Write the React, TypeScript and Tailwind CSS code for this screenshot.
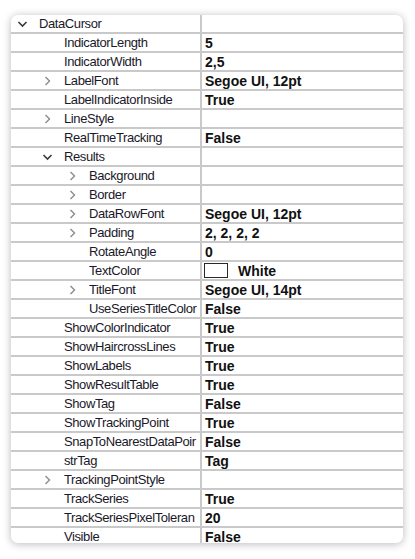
type Row = {
  name: string;
  value?: string;
  level: 0 | 1 | 2;
  toggle?: "open" | "closed";
  color?: boolean;
};

const rows: Row[] = [
  { name: "DataCursor", level: 0, toggle: "open" },
  { name: "IndicatorLength", value: "5", level: 1 },
  { name: "IndicatorWidth", value: "2,5", level: 1 },
  { name: "LabelFont", value: "Segoe UI, 12pt", level: 1, toggle: "closed" },
  { name: "LabelIndicatorInside", value: "True", level: 1 },
  { name: "LineStyle", level: 1, toggle: "closed" },
  { name: "RealTimeTracking", value: "False", level: 1 },
  { name: "Results", level: 1, toggle: "open" },
  { name: "Background", level: 2, toggle: "closed" },
  { name: "Border", level: 2, toggle: "closed" },
  { name: "DataRowFont", value: "Segoe UI, 12pt", level: 2, toggle: "closed" },
  { name: "Padding", value: "2, 2, 2, 2", level: 2, toggle: "closed" },
  { name: "RotateAngle", value: "0", level: 2 },
  { name: "TextColor", value: "White", level: 2, color: true },
  { name: "TitleFont", value: "Segoe UI, 14pt", level: 2, toggle: "closed" },
  { name: "UseSeriesTitleColor", value: "False", level: 2 },
  { name: "ShowColorIndicator", value: "True", level: 1 },
  { name: "ShowHaircrossLines", value: "True", level: 1 },
  { name: "ShowLabels", value: "True", level: 1 },
  { name: "ShowResultTable", value: "True", level: 1 },
  { name: "ShowTag", value: "False", level: 1 },
  { name: "ShowTrackingPoint", value: "True", level: 1 },
  { name: "SnapToNearestDataPoir", value: "False", level: 1 },
  { name: "strTag", value: "Tag", level: 1 },
  { name: "TrackingPointStyle", level: 1, toggle: "closed" },
  { name: "TrackSeries", value: "True", level: 1 },
  { name: "TrackSeriesPixelToleran", value: "20", level: 1 },
  { name: "Visible", value: "False", level: 1 },
];

const indent = ["pl-[6px]", "pl-[31px]", "pl-[56px]"];

function Toggle({ kind }: { kind?: "open" | "closed" }) {
  if (kind === "open")
    return (
      <svg width="11" height="8" viewBox="0 0 11 8" className="shrink-0">
        <polyline points="1.5,2 5.5,6 9.5,2" fill="none" stroke="#3a3a3a" strokeWidth="1.6" />
      </svg>
    );
  if (kind === "closed")
    return (
      <svg width="11" height="10" viewBox="0 0 11 10" className="shrink-0">
        <polyline points="3.5,1 7.5,5 3.5,9" fill="none" stroke="#8c8c8c" strokeWidth="1.4" />
      </svg>
    );
  return <span className="w-[11px] shrink-0" />;
}

export default function App() {
  return (
    <div className="w-[415px] h-[559px] bg-white pl-[11px] pt-[15px]" style={{ fontFamily: '"Liberation Sans", Arial, sans-serif' }}>
      <div className="w-[392px] h-[528px] rounded-[7px] overflow-hidden bg-white shadow-[0_1px_9px_rgba(0,0,0,0.28)]">
        {rows.map((r) => (
          <div key={r.name} className="flex h-[19px] border-b-2 border-[#c9c9c9]">
            <div className={`w-[189px] shrink-0 flex items-center gap-[11px] overflow-hidden whitespace-nowrap ${indent[r.level]}`}>
              <Toggle kind={r.toggle} />
              <span className="text-[13px] tracking-[-0.4px] text-[#1a1829] leading-none">{r.name}</span>
            </div>
            <div className="flex-1 border-l-2 border-[#c9c9c9] flex items-center pl-[3px] overflow-hidden whitespace-nowrap">
              {r.color && <span className="w-[24px] h-[15px] border border-[#2a2a2a] bg-white mr-[10px] -ml-[1px]" />}
              {r.value && <span className="text-[14px] font-bold text-[#111] leading-none">{r.value}</span>}
            </div>
          </div>
        ))}
      </div>
    </div>
  );
}
